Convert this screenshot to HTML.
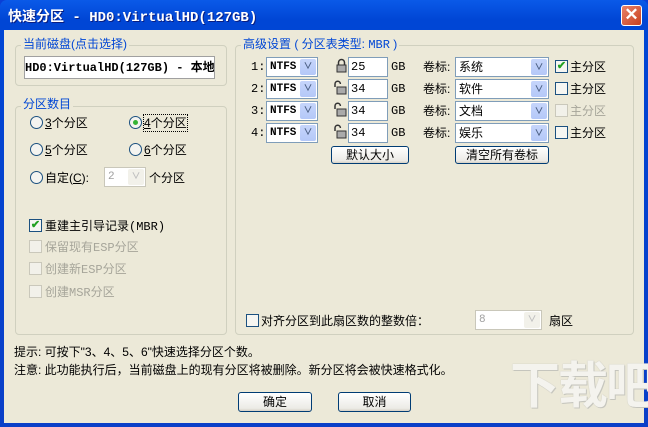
<!DOCTYPE html>
<html><head><meta charset="utf-8"><style>
*{box-sizing:border-box;margin:0;padding:0}
body{width:648px;height:427px;overflow:hidden;background:#0a3fd6;font-family:"Liberation Sans","Noto Sans CJK SC",sans-serif;font-size:12px;color:#000;position:relative}
.win{position:absolute;left:0;top:0;width:648px;height:427px;background:linear-gradient(#0a5ae8,#0046d5 20px,#0a3fc8);border-radius:7px 7px 0 0}
.body{position:absolute;left:4px;top:30px;width:640px;height:393px;background:#ECE9D8}
.title{position:absolute;left:8px;top:6px;color:#fff;font-weight:bold;font-size:14px;font-family:"Liberation Mono","Noto Sans CJK SC",monospace;text-shadow:1px 1px #0a1e80}
.close{position:absolute;left:621px;top:5px;width:21px;height:21px;border:1px solid #fff;border-radius:3px;background:linear-gradient(135deg,#e8826a,#c9401e);color:#fff;font-size:17px;font-weight:bold;text-align:center;line-height:18px}
.a{position:absolute;white-space:nowrap;line-height:16px}
.grp{position:absolute;border:1px solid #d0d0bf;border-radius:4px}
.lbl{position:absolute;background:#ECE9D8;color:#0046d5;padding:0 2px;font-size:12px;line-height:14px}
.tb,.cb{position:absolute;background:#fff;border:1px solid #7f9db9;height:20px;padding-left:2px;display:flex;align-items:center;font-family:"Liberation Mono","Noto Sans CJK SC",monospace;font-size:12px;line-height:12px;overflow:hidden;white-space:nowrap}
.cb{padding-left:3px;font-weight:bold;font-size:11px}
.cb.n{font-weight:normal;font-size:12px;font-family:"Liberation Sans","Noto Sans CJK SC",sans-serif}
.cb i{position:absolute;right:1px;top:1px;width:16px;height:16px;background:linear-gradient(#c6d5fb,#b4c8f8);border-radius:2px;color:#4d6185;font-style:normal;font-size:9px;text-align:center;line-height:16px;font-weight:bold}
.cb.dis{border-color:#c9c7ba;color:#a0a0a0;font-weight:normal}
.cb.dis i{background:#f2f1ea;color:#c0c0c0}
.chk{position:absolute;width:13px;height:13px;border:1px solid #1c5180;background:#f6f6f2;color:#21a121;font-size:11px;line-height:11px;text-align:center;font-weight:bold}
.chk.dis{border-color:#cac8bb;background:#f2f1ea}
.rad{position:absolute;width:13px;height:13px;border:1px solid #1c5180;border-radius:50%;background:#f4f4f0}
.rad.on:after{content:"";position:absolute;left:3px;top:3px;width:5px;height:5px;border-radius:50%;background:#35b435}
.btn{position:absolute;border:1px solid #003c74;border-radius:3px;background:linear-gradient(#fff,#ecebe6 85%,#d6d0c5);text-align:center;line-height:18px;height:20px}
.g{color:#a6a59a}
.m{font-family:"Liberation Mono","Noto Sans CJK SC",monospace}
svg{position:absolute}
</style></head><body>
<div class="win"></div>
<div class="title">快速分区 - HD0:VirtualHD(127GB)</div>
<div class="close">✕</div>
<div class="body"></div>

<div class="grp" style="left:15px;top:45px;width:212px;height:41px"></div>
<div class="lbl" style="left:21px;top:37px">当前磁盘(点击选择)</div>
<div class="tb" style="left:24px;top:56px;width:191px;height:23px;font-weight:bold;border-color:#a0a0a0;font-size:12px;padding-left:0">HD0:VirtualHD(127GB) - 本地磁盘</div>

<div class="grp" style="left:15px;top:106px;width:212px;height:229px"></div>
<div class="lbl" style="left:21px;top:97px">分区数目</div>
<div class="rad" style="left:30px;top:116px"></div><div class="a" style="left:45px;top:115px"><u>3</u>个分区</div>
<div class="rad on" style="left:129px;top:116px"></div><div class="a" style="left:144px;top:115px;outline:1px dotted #000"><u>4</u>个分区</div>
<div class="rad" style="left:30px;top:143px"></div><div class="a" style="left:45px;top:142px"><u>5</u>个分区</div>
<div class="rad" style="left:129px;top:143px"></div><div class="a" style="left:144px;top:142px"><u>6</u>个分区</div>
<div class="rad" style="left:30px;top:171px"></div><div class="a" style="left:45px;top:170px">自定(<u>C</u>):</div>
<div class="cb dis" style="left:104px;top:167px;width:42px">2<i>∨</i></div>
<div class="a" style="left:149px;top:170px">个分区</div>
<div class="chk" style="left:29px;top:219px">✔</div><div class="a" style="left:45px;top:218px">重建主引导记录<span class="m">(MBR)</span></div>
<div class="chk dis" style="left:29px;top:240px"></div><div class="a g" style="left:45px;top:239px">保留现有<span class="m">ESP</span>分区</div>
<div class="chk dis" style="left:29px;top:262px"></div><div class="a g" style="left:45px;top:261px">创建新<span class="m">ESP</span>分区</div>
<div class="chk dis" style="left:29px;top:285px"></div><div class="a g" style="left:45px;top:284px">创建<span class="m">MSR</span>分区</div>

<div class="grp" style="left:235px;top:45px;width:399px;height:290px"></div>
<div class="lbl" style="left:241px;top:37px">高级设置 ( 分区表类型: <span class="m">MBR</span> )</div>

<div class="a m" style="left:251px;top:59px">1:</div><div class="cb" style="left:266px;top:57px;width:52px">NTFS<i>∨</i></div>
<svg style="left:336px;top:58px" width="11" height="15" viewBox="0 0 11 15"><path d="M2.5 7V4.5a3 3 0 0 1 6 0V7" fill="none" stroke="#333" stroke-width="1.5"/><rect x="1" y="7" width="9" height="7" fill="#aaa" stroke="#333"/></svg>
<div class="tb" style="left:348px;top:57px;width:40px">25</div><div class="a m" style="left:391px;top:59px">GB</div>
<div class="a" style="left:423px;top:59px">卷标:</div><div class="cb n" style="left:455px;top:57px;width:94px">系统<i>∨</i></div>
<div class="chk" style="left:555px;top:60px">✔</div><div class="a" style="left:570px;top:59px">主分区</div>

<div class="a m" style="left:251px;top:81px">2:</div><div class="cb" style="left:266px;top:79px;width:52px">NTFS<i>∨</i></div>
<svg style="left:333px;top:80px" width="14" height="15" viewBox="0 0 14 15"><path d="M2 7V4a2.7 2.7 0 0 1 5.4 0" fill="none" stroke="#333" stroke-width="1.5"/><rect x="4" y="7" width="9" height="7" fill="#aaa" stroke="#333"/></svg>
<div class="tb" style="left:348px;top:79px;width:40px">34</div><div class="a m" style="left:391px;top:81px">GB</div>
<div class="a" style="left:423px;top:81px">卷标:</div><div class="cb n" style="left:455px;top:79px;width:94px">软件<i>∨</i></div>
<div class="chk" style="left:555px;top:82px"></div><div class="a" style="left:570px;top:81px">主分区</div>

<div class="a m" style="left:251px;top:103px">3:</div><div class="cb" style="left:266px;top:101px;width:52px">NTFS<i>∨</i></div>
<svg style="left:333px;top:102px" width="14" height="15" viewBox="0 0 14 15"><path d="M2 7V4a2.7 2.7 0 0 1 5.4 0" fill="none" stroke="#333" stroke-width="1.5"/><rect x="4" y="7" width="9" height="7" fill="#aaa" stroke="#333"/></svg>
<div class="tb" style="left:348px;top:101px;width:40px">34</div><div class="a m" style="left:391px;top:103px">GB</div>
<div class="a" style="left:423px;top:103px">卷标:</div><div class="cb n" style="left:455px;top:101px;width:94px">文档<i>∨</i></div>
<div class="chk dis" style="left:555px;top:104px"></div><div class="a g" style="left:570px;top:103px">主分区</div>

<div class="a m" style="left:251px;top:125px">4:</div><div class="cb" style="left:266px;top:123px;width:52px">NTFS<i>∨</i></div>
<svg style="left:333px;top:124px" width="14" height="15" viewBox="0 0 14 15"><path d="M2 7V4a2.7 2.7 0 0 1 5.4 0" fill="none" stroke="#333" stroke-width="1.5"/><rect x="4" y="7" width="9" height="7" fill="#aaa" stroke="#333"/></svg>
<div class="tb" style="left:348px;top:123px;width:40px">34</div><div class="a m" style="left:391px;top:125px">GB</div>
<div class="a" style="left:423px;top:125px">卷标:</div><div class="cb n" style="left:455px;top:123px;width:94px">娱乐<i>∨</i></div>
<div class="chk" style="left:555px;top:126px"></div><div class="a" style="left:570px;top:125px">主分区</div>

<div class="btn" style="left:331px;top:146px;width:78px;height:18px;line-height:16px">默认大小</div>
<div class="btn" style="left:455px;top:146px;width:94px;height:18px;line-height:16px">清空所有卷标</div>

<div class="chk" style="left:246px;top:314px"></div><div class="a" style="left:261px;top:313px">对齐分区到此扇区数的整数倍：</div>
<div class="cb dis" style="left:475px;top:310px;width:67px">8<i>∨</i></div>
<div class="a" style="left:549px;top:313px">扇区</div>

<div class="a" style="left:14px;top:344px">提示: 可按下"3、4、5、6"快速选择分区个数。</div>
<div class="a" style="left:14px;top:362px">注意: 此功能执行后，当前磁盘上的现有分区将被删除。新分区将会被快速格式化。</div>
<div class="btn" style="left:238px;top:392px;width:74px">确定</div>
<div class="btn" style="left:338px;top:392px;width:73px">取消</div>
<div class="a" style="left:510px;top:358px;font-size:50px;line-height:56px;color:#f4f3ee;font-weight:bold;letter-spacing:-2px;text-shadow:0 0 1px #b8b8b0,1px 1px 0 #c8c8c0">下载吧</div>
</body></html>
